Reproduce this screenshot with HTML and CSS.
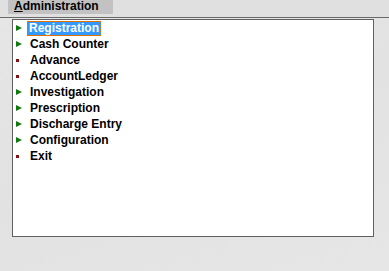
FILE: index.html
```html
<!DOCTYPE html>
<html lang="en">
<head>
    <meta charset="UTF-8">
    <title>Administration</title>
    <link rel="stylesheet" href="styles.css">
</head>
<body>

    <div class="menubar">
        <div class="menu-title"><u>A</u>dministration</div>
    </div>

    <div class="tree">
        <ul>
            <li class="node selected"><span class="arrow"></span><span class="label">Registration</span></li>
            <li class="node"><span class="arrow"></span><span class="label">Cash Counter</span></li>
            <li class="leaf"><span class="dot"></span><span class="label">Advance</span></li>
            <li class="leaf"><span class="dot"></span><span class="label">AccountLedger</span></li>
            <li class="node"><span class="arrow"></span><span class="label">Investigation</span></li>
            <li class="node"><span class="arrow"></span><span class="label">Prescription</span></li>
            <li class="node"><span class="arrow"></span><span class="label">Discharge Entry</span></li>
            <li class="node"><span class="arrow"></span><span class="label">Configuration</span></li>
            <li class="leaf"><span class="dot"></span><span class="label">Exit</span></li>
        </ul>
    </div>

</body>
</html>
```

FILE: styles.css
```css
body {
    margin: 0;
    font-family: "Liberation Sans", Arial, sans-serif;
    background: linear-gradient(160deg, #e6e6e6 0%, #e2e2e2 50%, #e6e6e6 100%);
    height: 271px;
    overflow: hidden;
}

.menubar {
    display: flex;
    height: 18px;
    border-bottom: 1px solid #6a6a6a;
    background-color: #e0e0e0;
    padding-left: 8px;
    box-sizing: border-box;
}

.menu-title {
    background-color: #c2c2c2;
    height: 14px;
    width: 105px;
    padding-left: 6px;
    box-sizing: border-box;
    font-size: 12px;
    font-weight: bold;
    line-height: 12px;
    color: #000;
}

.tree {
    margin: 1px 0 0 12px;
    width: 362px;
    height: 218px;
    box-sizing: border-box;
    background: #fff;
    border: 1px solid #616161;
}

.tree ul {
    list-style: none;
    margin: 0;
    padding: 0;
}

.tree li {
    display: flex;
    align-items: center;
    height: 16px;
    font-size: 12px;
    font-weight: bold;
    color: #000;
}

.arrow {
    width: 0;
    height: 0;
    margin-left: 3px;
    border-top: 3px solid transparent;
    border-bottom: 3px solid transparent;
    border-left: 6px solid #0e7a0e;
}

.dot {
    width: 3px;
    height: 3px;
    margin-left: 3px;
    margin-right: 3px;
    background: #8a1010;
}

.label {
    margin-left: 7px;
    padding: 0 1px;
    line-height: 13px;
}

.selected .label {
    margin-left: 5px;
    background: #3399ff;
    color: #fff;
    border: 1px dotted #e07000;
}
```
